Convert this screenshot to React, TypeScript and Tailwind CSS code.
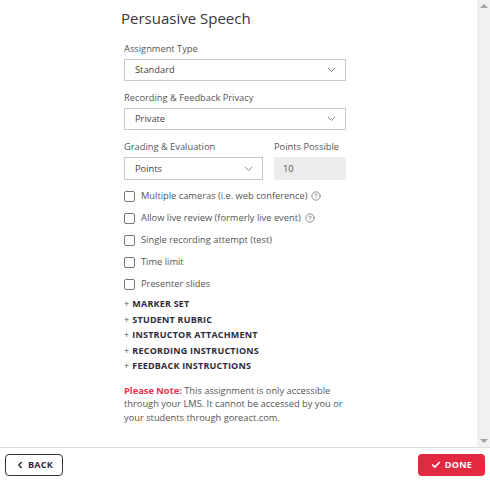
import { Check, ChevronLeft, CircleHelp } from "lucide-react";

const font = { fontFamily: '"Open Sans", "Liberation Sans", sans-serif' };

function Chevron() {
  return (
    <svg width="9" height="6" viewBox="0 0 9 6" className="text-[#888]">
      <polyline points="1,1 4.5,4.5 8,1" fill="none" stroke="currentColor" strokeWidth="1" />
    </svg>
  );
}

function Select({ value, className }: { value: string; className: string }) {
  return (
    <div
      className={
        "h-[22px] border border-[#c8c8c8] bg-white flex items-center justify-between pl-[10px] pr-[9px] text-[9.3px] text-[#444] " +
        className
      }
    >
      <span>{value}</span>
      <Chevron />
    </div>
  );
}

function Label({ children }: { children: string }) {
  return <div className="text-[9.3px] leading-[14px] text-[#555] mb-[3px]">{children}</div>;
}

function CheckRow({ label, help }: { label: string; help?: boolean }) {
  return (
    <div className="flex items-center h-[22px] text-[9.3px] text-[#555]">
      <span className="w-[11px] h-[11px] border border-[#777] rounded-[2px] mr-[6px] bg-white" />
      <span>{label}</span>
      {help && <CircleHelp size={10} strokeWidth={1.5} className="ml-[4px] text-[#555]" />}
    </div>
  );
}

const sections = [
  "MARKER SET",
  "STUDENT RUBRIC",
  "INSTRUCTOR ATTACHMENT",
  "RECORDING INSTRUCTIONS",
  "FEEDBACK INSTRUCTIONS",
];

export default function App() {
  return (
    <div className="w-[490px] h-[483px] bg-white flex flex-col overflow-hidden" style={font}>
      <div className="h-[447px] flex">
        <div className="flex-1 pl-[121px] pt-[7px]">
          <h1 className="text-[15px] leading-[22px] text-[#3a3340] mb-[13px]">Persuasive Speech</h1>
          <div className="w-[222px] pl-[3px]">
            <Label>Assignment Type</Label>
            <Select value="Standard" className="w-[222px]" />
            <div className="h-[10px]" />
            <Label>Recording &amp; Feedback Privacy</Label>
            <Select value="Private" className="w-[222px]" />
            <div className="h-[10px]" />
            <div className="flex gap-[11px]">
              <div>
                <Label>Grading &amp; Evaluation</Label>
                <Select value="Points" className="w-[139px] h-[23px]" />
              </div>
              <div>
                <Label>Points Possible</Label>
                <div className="w-[72px] h-[23px] bg-[#ececec] flex items-center pl-[9px] text-[9.3px] text-[#555]">10</div>
              </div>
            </div>
            <div className="mt-[5px]">
              <CheckRow label="Multiple cameras (i.e. web conference)" help />
              <CheckRow label="Allow live review (formerly live event)" help />
              <CheckRow label="Single recording attempt (test)" />
              <CheckRow label="Time limit" />
              <CheckRow label="Presenter slides" />
            </div>
            <div className="mt-[1px]">
              {sections.map((s) => (
                <div key={s} className="h-[15.6px] flex items-center text-[9px] font-bold tracking-[0.2px] text-[#2e2a3a]">
                  <span className="mr-[3px] font-normal text-[9px] text-[#555]">+</span>
                  {s}
                </div>
              ))}
            </div>
            <p className="mt-[10px] text-[9.3px] leading-[13.5px] text-[#555] w-[222px]">
              <span className="font-bold text-[#e8344c]">Please Note:</span> This assignment is only accessible
              through your LMS. It cannot be accessed by you or your students through goreact.com.
            </p>
          </div>
        </div>
        <div className="w-[13px] bg-[#f1f1f1] flex flex-col items-center justify-between py-[4px]">
          <div className="w-0 h-0 border-l-[4px] border-r-[4px] border-b-[4px] border-l-transparent border-r-transparent border-b-[#a3a3a3]" />
          <div className="w-0 h-0 border-l-[4px] border-r-[4px] border-t-[4px] border-l-transparent border-r-transparent border-t-[#a3a3a3]" />
        </div>
      </div>
      <div className="flex-1 border-t border-[#dcdcdc] flex items-center justify-between px-[5px] pb-[1px]">
        <button className="w-[58px] h-[22px] border border-[#333] rounded-[4px] flex items-center justify-center gap-[3px] text-[9px] font-bold text-[#2e2a3a] tracking-[0.3px]">
          <ChevronLeft size={10} strokeWidth={3.5} />
          BACK
        </button>
        <button className="w-[67px] h-[22px] bg-[#e2293f] rounded-[4px] flex items-center justify-center gap-[4px] text-[9px] font-bold text-white tracking-[0.3px]">
          <Check size={10} strokeWidth={4} />
          DONE
        </button>
      </div>
    </div>
  );
}
